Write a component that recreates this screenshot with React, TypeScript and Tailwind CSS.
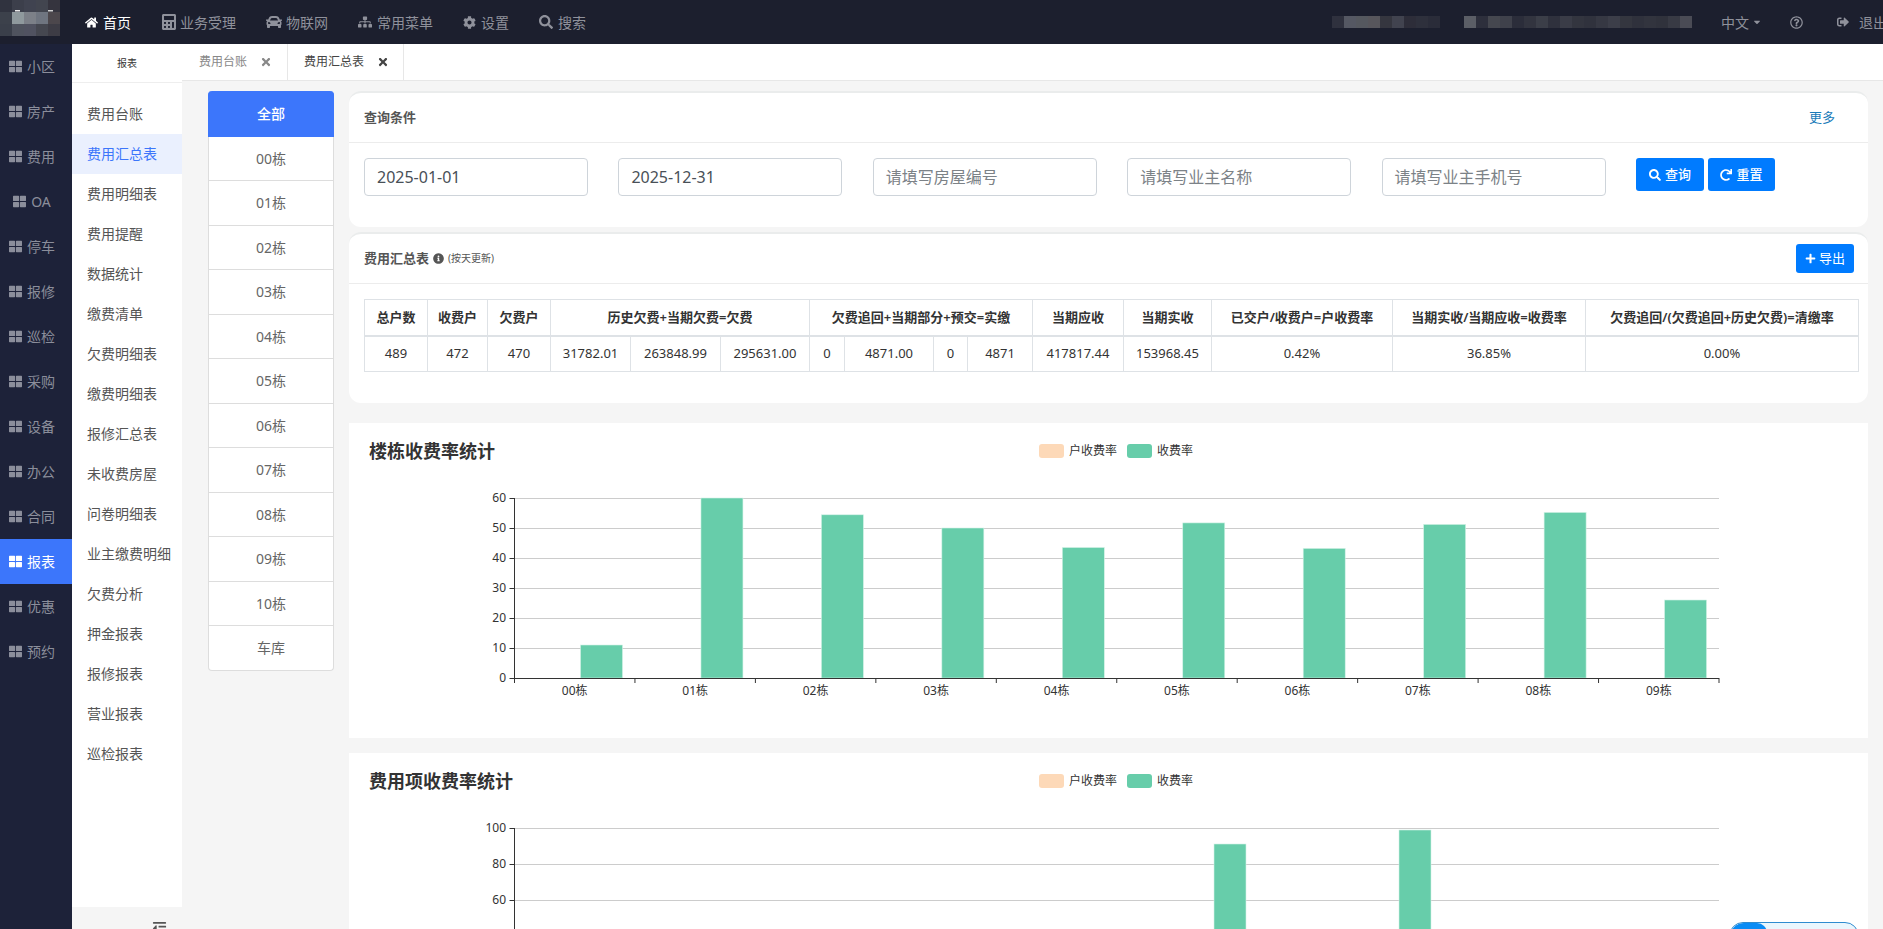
import { FaHome, FaCalculator, FaCar, FaSitemap, FaCog, FaSearch, FaThLarge, FaTimes, FaInfoCircle, FaPlus, FaRedo, FaSignOutAlt, FaRegQuestionCircle, FaOutdent, FaCaretDown } from 'react-icons/fa'

const sideItems = ['小区', '房产', '费用', 'OA', '停车', '报修', '巡检', '采购', '设备', '办公', '合同', '报表', '优惠', '预约']
const menuItems = ['费用台账', '费用汇总表', '费用明细表', '费用提醒', '数据统计', '缴费清单', '欠费明细表', '缴费明细表', '报修汇总表', '未收费房屋', '问卷明细表', '业主缴费明细', '欠费分析', '押金报表', '报修报表', '营业报表', '巡检报表']
const buildings = ['全部', '00栋', '01栋', '02栋', '03栋', '04栋', '05栋', '06栋', '07栋', '08栋', '09栋', '10栋', '车库']
const navItems = [
  { label: '业务受理', icon: FaCalculator, w: 'w-[105px]', ic: 'text-[16px] mr-[3px]' },
  { label: '物联网', icon: FaCar, w: 'w-[92px]', ic: 'text-[16px] mr-[4px]' },
  { label: '常用菜单', icon: FaSitemap, w: 'w-[105px]', ic: 'text-[14px] mr-[5px]' },
  { label: '设置', icon: FaCog, w: 'w-[76px]', ic: 'text-[13px] mr-[5px]' },
  { label: '搜索', icon: FaSearch, w: 'w-[60px]', ic: 'text-[14px] mr-[5px]' },
]
const colClasses = ['w-[63px]', 'w-[60px]', 'w-[63px]', 'w-[80px]', 'w-[90px]', 'w-[89px]', 'w-[35px]', 'w-[89px]', 'w-[34px]', 'w-[65px]', 'w-[91px]', 'w-[88px]', 'w-[181px]', 'w-[193px]', 'w-[273px]']
const rowValues = ['489', '472', '470', '31782.01', '263848.99', '295631.00', '0', '4871.00', '0', '4871', '417817.44', '153968.45', '0.42%', '36.85%', '0.00%']
const headers = [
  { t: '总户数' }, { t: '收费户' }, { t: '欠费户' },
  { t: '历史欠费+当期欠费=欠费', span: 3 },
  { t: '欠费追回+当期部分+预交=实缴', span: 4 },
  { t: '当期应收' }, { t: '当期实收' },
  { t: '已交户/收费户=户收费率' }, { t: '当期实收/当期应收=收费率' }, { t: '欠费追回/(欠费追回+历史欠费)=清缴率' },
]
const buildingRates = [11, 60, 54.4, 50, 43.5, 51.7, 43.2, 51.2, 55.2, 26]

const logoCells = [
  ['#30333f', '#3c3f4b', '#404350', '#42454f', '#35343e'],
  ['#3c414b', '#8f999d', '#7c8088', '#6f7580', '#4c474c'],
  ['#3a3f4a', '#4f535e', '#505260', '#454750', '#3d3c45'],
]
const blurA = ['#2f313e', '#555863', '#55585f', '#57565c', '#35363f', '#41434f', '#2d2d39', '#2e303c', '#2a2c39']
const blurB = ['#5b5e66', '#2d2f3c', '#45474f', '#3f414b', '#2b2d3a', '#32343f', '#3b3e48', '#2f313d', '#3a3c47', '#33353f', '#30323d', '#363843', '#3c3e49', '#34363f', '#2f313c', '#32343e', '#30323c', '#383a44', '#4a4b55']

function Mosaic({ cells, w }: { cells: string[]; w: number }) {
  return (
    <svg width={w} height={12} className="block shrink-0">
      {cells.map((c, i) => <rect key={i} x={i * 12} y={0} width={12} height={12} fill={c} />)}
    </svg>
  )
}

function Legend() {
  return (
    <div className="flex items-center text-[12px] text-[#333]">
      <span className="w-[25px] h-[14px] rounded-[3px] bg-[#fdd9b8]" />
      <span className="ml-[5px] w-[58px]">户收费率</span>
      <span className="w-[25px] h-[14px] rounded-[3px] bg-[#67cdaa]" />
      <span className="ml-[5px]">收费率</span>
    </div>
  )
}

const x0 = 165.5
const plotRight = 1370
const plotTop = 19

function BuildingChart() {
  const step = (plotRight - x0) / 10
  return (
    <svg width={1519} height={259} className="block">
      {[60, 50, 40, 30, 20, 10].map((v, i) => (
        <line key={v} x1={x0} x2={plotRight} y1={plotTop + i * 30 + 0.5} y2={plotTop + i * 30 + 0.5} stroke="#ccc" />
      ))}
      {buildingRates.map((v, i) => (
        <rect key={i} x={x0 + i * step + 66} y={plotTop + 180 - v * 3} width={42} height={v * 3} fill="#67cdaa" stroke="#d4f2e7" strokeWidth={0.6} />
      ))}
      <line x1={x0} x2={x0} y1={plotTop} y2={plotTop + 180} stroke="#333" />
      <line x1={x0} x2={plotRight} y1={plotTop + 180.5} y2={plotTop + 180.5} stroke="#333" />
      {[60, 50, 40, 30, 20, 10, 0].map((v, i) => (
        <g key={v}>
          <line x1={x0 - 5} x2={x0} y1={plotTop + i * 30 + 0.5} y2={plotTop + i * 30 + 0.5} stroke="#333" />
          <text x={157} y={plotTop + i * 30 + 4} textAnchor="end" fontSize={12} fill="#333">{v}</text>
        </g>
      ))}
      {Array.from({ length: 11 }).map((_, i) => (
        <line key={i} x1={x0 + i * step} x2={x0 + i * step} y1={plotTop + 180} y2={plotTop + 185} stroke="#333" />
      ))}
      {buildingRates.map((_, i) => (
        <text key={i} x={x0 + i * step + step / 2} y={plotTop + 197} textAnchor="middle" fontSize={12} fill="#333">{`0${i}栋`}</text>
      ))}
    </svg>
  )
}

function FeeChart() {
  return (
    <svg width={1519} height={170} className="block">
      {[100, 80, 60, 40, 20].map((v, i) => (
        <g key={v}>
          <line x1={x0} x2={plotRight} y1={plotTop + i * 36 + 0.5} y2={plotTop + i * 36 + 0.5} stroke="#ccc" />
          <line x1={x0 - 5} x2={x0} y1={plotTop + i * 36 + 0.5} y2={plotTop + i * 36 + 0.5} stroke="#333" />
          <text x={157} y={plotTop + i * 36 + 4} textAnchor="end" fontSize={12} fill="#333">{v}</text>
        </g>
      ))}
      <rect x={865} y={35} width={32} height={135} fill="#67cdaa" stroke="#d4f2e7" strokeWidth={0.6} />
      <rect x={1050} y={21} width={32} height={149} fill="#67cdaa" stroke="#d4f2e7" strokeWidth={0.6} />
      <line x1={x0} x2={x0} y1={plotTop} y2={170} stroke="#333" />
    </svg>
  )
}

export default function App() {
  return (
    <div className="relative flex flex-col h-screen overflow-hidden bg-[#f5f5f5] font-['Noto_Sans','Noto_Sans_CJK_SC',sans-serif] text-[14px] text-[#333]">
      {/* top bar */}
      <div className="flex items-center h-[44px] shrink-0 bg-[#1c1f2e] text-[#8f919b]">
        <svg width={60} height={36} className="block self-start shrink-0">
          {logoCells.map((row, y) => row.map((c, x) => <rect key={`${x}-${y}`} x={x * 12} y={y * 12} width={12} height={12} fill={c} />))}
          <rect x={15} y={10} width={5} height={1.5} fill="#e8e8e8" />
          <rect x={48} y={10} width={5} height={1.5} fill="#d0d0d0" />
        </svg>
        <div className="flex items-center w-[101px] pl-[25px] text-white">
          <FaHome className="text-[13px] mr-[5px]" />
          <span>首页</span>
        </div>
        {navItems.map((item) => (
          <div key={item.label} className={`flex items-center ${item.w}`}>
            <item.icon className={item.ic} />
            <span>{item.label}</span>
          </div>
        ))}
        <div className="flex-1 flex items-center justify-end pr-[29px]">
          <Mosaic cells={blurA} w={108} />
          <div className="w-[24px] shrink-0" />
          <Mosaic cells={blurB} w={228} />
        </div>
        <div className="flex items-center shrink-0 w-[162px] whitespace-nowrap">
          <span>中文</span>
          <FaCaretDown className="text-[10px] ml-[3px] shrink-0" />
          <FaRegQuestionCircle className="text-[13px] ml-[28px] shrink-0" />
          <FaSignOutAlt className="text-[12px] ml-[34px] shrink-0" />
          <span className="ml-[10px]">退出</span>
        </div>
      </div>

      <div className="flex flex-1 min-h-0">
        {/* first level menu */}
        <div className="w-[72px] shrink-0 bg-[#1d2239] text-[#8b8e9b]">
          {sideItems.map((item) => (
            <div key={item} className={`flex items-center justify-center h-[45px] pr-[8px] ${item === '报表' ? 'bg-[#3c76fb] text-white' : ''}`}>
              <FaThLarge className="text-[13px] mr-[5px]" />
              <span>{item}</span>
            </div>
          ))}
        </div>

        {/* second level menu */}
        <div className="flex flex-col w-[110px] shrink-0">
          <div className="flex-1 bg-white">
            <div className="flex items-center justify-center h-[39px] border-b border-[#eee] text-[10px]">报表</div>
            <div className="pt-[11px]">
              {menuItems.map((item) => (
                <div key={item} className={`flex items-center h-[40px] pl-[15px] pb-[2px] whitespace-nowrap ${item === '费用汇总表' ? 'bg-[#eaf0fe] text-[#3c76fb]' : 'text-[#555]'}`}>{item}</div>
              ))}
            </div>
          </div>
          <div className="flex justify-end h-[22px] pt-[14px] pr-[15px] text-[#555]">
            <FaOutdent className="text-[15px]" />
          </div>
        </div>

        <div className="flex flex-col flex-1 min-w-0">
          {/* tabs */}
          <div className="flex items-end h-[37px] shrink-0 bg-white border-b border-[#e7e7e7] text-[12px]">
            <div className="flex items-center h-[36px] w-[106px] pl-[17px] border-r border-[#e7e7e7] text-[#888]">
              <span>费用台账</span>
              <FaTimes className="text-[12px] ml-[13px]" />
            </div>
            <div className="flex items-center h-[36px] w-[116px] pl-[16px] border-r border-[#e7e7e7] text-[#444]">
              <span>费用汇总表</span>
              <FaTimes className="text-[12px] ml-[13px]" />
            </div>
          </div>

          <div className="flex flex-1 min-h-0 pl-[26px] pt-[10px]">
            {/* buildings */}
            <div className="w-[126px] shrink-0 self-start">
              {buildings.map((b, i) => (
                <div
                  key={b}
                  className={`flex items-center justify-center border-b border-x ${i === 0 ? 'h-[45.5px] bg-[#3c76fb] border-[#3c76fb] text-white rounded-t-[4px] font-medium' : 'h-[44.5px] bg-white border-[#ddd] text-[#666]'} ${i === buildings.length - 1 ? 'rounded-b-[4px]' : ''}`}
                >
                  {b}
                </div>
              ))}
            </div>

            <div className="w-[1519px] ml-[15px] shrink-0">
              {/* query card */}
              <div className="h-[136px] bg-white rounded-[12px] border-t-2 border-[#eaecec]">
                <div className="flex items-center justify-between h-[50px] pl-[15px] pr-[33px] border-b border-[#ececec]">
                  <span className="text-[13px] font-semibold text-[#555]">查询条件</span>
                  <span className="text-[13px] text-[#1a7bb9]">更多</span>
                </div>
                <div className="flex items-start gap-[30.4px] pt-[15px] pl-[15px]">
                  {['2025-01-01', '2025-12-31', '请填写房屋编号', '请填写业主名称', '请填写业主手机号'].map((v, i) => (
                    <div key={v} className={`flex items-center w-[224px] h-[38px] px-[12px] border border-[#ced4da] rounded-[4px] text-[16px] ${i < 2 ? 'text-[#495057]' : 'text-[#7c8287]'}`}>{v}</div>
                  ))}
                  <div className="flex gap-[4px]">
                    <button className="flex items-center justify-center w-[68px] h-[33px] rounded-[3px] bg-[#007bff] text-white text-[13px] font-medium">
                      <FaSearch className="text-[12px] mr-[4px]" />查询
                    </button>
                    <button className="flex items-center justify-center w-[67px] h-[33px] rounded-[3px] bg-[#007bff] text-white text-[13px] font-medium">
                      <FaRedo className="text-[12px] mr-[4px]" />重置
                    </button>
                  </div>
                </div>
              </div>

              {/* summary card */}
              <div className="h-[171px] mt-[5px] bg-white rounded-[12px] border-t-2 border-[#eaecec]">
                <div className="flex items-center justify-between h-[50px] pl-[15px] pr-[14px] border-b border-[#ececec]">
                  <div className="flex items-center text-[#555]">
                    <span className="text-[13px] font-semibold">费用汇总表</span>
                    <FaInfoCircle className="text-[11px] ml-[4px]" />
                    <span className="text-[10px] ml-[4px]">(按天更新)</span>
                  </div>
                  <button className="flex items-center justify-center w-[58px] h-[29px] rounded-[3px] bg-[#007bff] text-white text-[13px]">
                    <FaPlus className="text-[11px] mr-[3px]" />导出
                  </button>
                </div>
                <div className="pt-[15px] pl-[15px]">
                  <table className="table-fixed border-collapse w-[1494px] text-[13px] text-center">
                    <colgroup>
                      {colClasses.map((c, i) => <col key={i} className={c} />)}
                    </colgroup>
                    <thead>
                      <tr className="h-[36px]">
                        {headers.map((h) => (
                          <th key={h.t} colSpan={h.span || 1} className="border border-b-2 border-[#dee2e6] font-semibold text-[#333] p-0 whitespace-nowrap">{h.t}</th>
                        ))}
                      </tr>
                    </thead>
                    <tbody>
                      <tr className="h-[36px]">
                        {rowValues.map((v, i) => (
                          <td key={i} className="border border-[#dee2e6] p-0">{v}</td>
                        ))}
                      </tr>
                    </tbody>
                  </table>
                </div>
              </div>

              {/* building chart */}
              <div className="h-[315px] mt-[20px] bg-white">
                <div className="flex items-center h-[56px] pl-[20px]">
                  <div className="w-[670px] text-[18px] font-bold text-[#333]">楼栋收费率统计</div>
                  <Legend />
                </div>
                <BuildingChart />
              </div>

              {/* fee item chart */}
              <div className="h-[300px] mt-[15px] bg-white">
                <div className="flex items-center h-[56px] pl-[20px]">
                  <div className="w-[670px] text-[18px] font-bold text-[#333]">费用项收费率统计</div>
                  <Legend />
                </div>
                <FeeChart />
              </div>
            </div>
          </div>
        </div>
      </div>

      {/* floating pill */}
      <div className="absolute left-[1729px] top-[922px] w-[130px] h-[20px] rounded-t-[14px] border border-[#2e8bcf] bg-[#e9f6fd] overflow-hidden">
        <div className="w-[37px] h-full rounded-tl-[14px] rounded-tr-[10px] bg-[#0a8cf5]" />
      </div>
    </div>
  )
}
